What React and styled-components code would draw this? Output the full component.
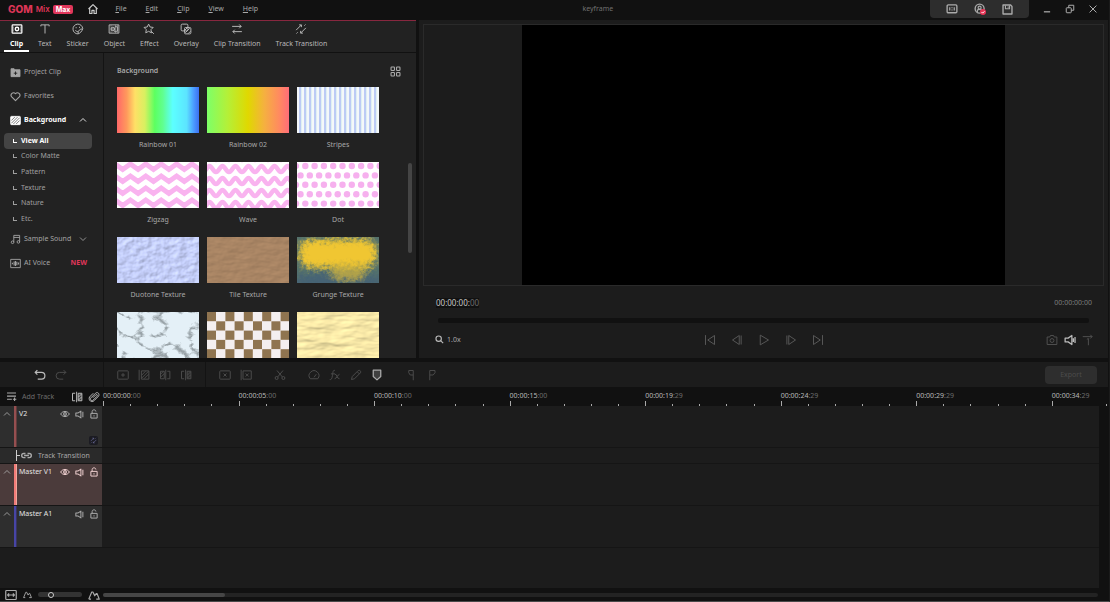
import React from "react";
import styled, { createGlobalStyle, css } from "styled-components";

const GlobalStyle = createGlobalStyle`
  *, *::before, *::after { box-sizing: border-box; }
  body {
    margin: 0;
    background: #111;
    color: #a8a8a8;
    font-family: "Noto Sans", "Open Sans", sans-serif;
    font-size: 7px;
    line-height: 10px;
  }
  button, input { font: inherit; color: inherit; margin: 0; }
  ul { list-style: none; margin: 0; padding: 0; }
`;

/* ---------- icons ---------- */

const glyphs = {
  home: <path d="M2 8 8 2.200 14 8M3.600 7v7h3v-4.200h2.800V14h3V7" strokeWidth="1.600" />,
  clip: <><rect x="1.500" y="2.500" width="13" height="11" rx="1" strokeWidth="1.600" /><circle cx="8" cy="8" r="2.300" strokeWidth="1.800" /><path d="M2 5.500h1.500M2 8h1.500M2 10.500h1.500M12.500 5.500H14M12.500 8H14M12.500 10.500H14" /></>,
  text: <path d="M2.500 4.500v-2h11v2M8 2.500V14" />,
  sticker: <><path d="M14.300 7.500A6.500 6.500 0 1 0 8 14.500c2.500-.5 5.500-3.500 6.300-7z" /><path d="M14 8c-3-.5-6 2-6 6M4.500 9.500c.8 1.500 2 2 3.500 2M5.500 5.500v1.500M10 5v1.500" /></>,
  object: <><rect x="1.500" y="2.500" width="13" height="11" /><circle cx="6.500" cy="8" r="2.500" fill="currentColor" fillOpacity=".5" /><path d="M9 5h3.500v6H8" /><path d="M4 2.500v11M12.500 2.500v11M10 2.500v11" strokeOpacity=".5" /></>,
  effect: <><path d="m7.500 1.500 1.900 3.800 4.200.6-3 3 .7 4.200-3.800-2-3.800 2 .7-4.200-3-3 4.200-.6z" /><path d="m11 11 3.500 3.500" /></>,
  overlay: <><rect x="1.500" y="1.500" width="9" height="9" rx="1.500" /><rect x="6" y="6" width="8.500" height="8.500" rx="1.500" /><path d="m6.500 9.500 3-3M7 13l6-6M11 14l3-3" /></>,
  swap: <path d="M1.500 4.500h12M11 2l2.500 2.500L11 7M14.500 11.500h-12M5 9l-2.500 2.500L5 14" />,
  swapSlant: <path d="M1.500 9.500 8.500 2.500M5.500 2.500h3v3M14.500 6.500l-7 7M10.500 13.500h-3v-3M12.500 3.500l1.500-1.500M2 14l1.500-1.500" />,
  folder: <><path d="M1.500 2.500H6L7.500 4h7v10h-13z" fill="currentColor" /><path d="M8 6.500v5M5.500 9h5" stroke="#222" /></>,
  heart: <path d="M8 14 2.500 8.500C-.5 5 4.500 0 8 4c3.500-4 8.500 1 5.500 4.500z" strokeWidth="1.600" />,
  pattern: <><rect x="1" y="2" width="14" height="12" rx="1" fill="currentColor" /><path d="m2 8 5-5M2 12l9-9M5 13l9-9M9 13l5-5" stroke="#444" strokeWidth="1" /></>,
  music: <><path d="M5.500 12V2h8.500v9.500M5.500 5H14" /><circle cx="3.700" cy="12" r="1.900" /><circle cx="12.200" cy="11.500" r="1.900" /></>,
  voice: <><rect x="1" y="2" width="14" height="12" /><path d="M3.500 7v2M6 5v6M8 4.500v7M10 5.500v5M12.500 6.500v3" strokeWidth="1.600" /></>,
  up: <path d="m2 11 6-6 6 6" strokeWidth="1.700" />,
  down: <path d="m2 5 6 6 6-6" strokeWidth="1.700" />,
  tiles: <><rect x="1.500" y="1.500" width="5" height="5" rx="1" strokeWidth="1.600" /><rect x="9.500" y="1.500" width="5" height="5" rx="1" strokeWidth="1.600" /><rect x="1.500" y="9.500" width="5" height="5" rx="1" strokeWidth="1.600" /><rect x="9.500" y="9.500" width="5" height="5" rx="1" strokeWidth="1.600" /></>,
  keypad: <><rect x="1.500" y="2.500" width="13" height="10.500" rx="1.500" strokeWidth="1.800" /><path d="M5 5.500v4.500M8 5.500v1.500M8 8.500V10M11 5.500v4.500" strokeWidth="1.600" /></>,
  account: <><circle cx="7.500" cy="7.500" r="6" strokeWidth="1.800" /><circle cx="7.500" cy="6.200" r="2" strokeWidth="1.600" /><path d="M4.500 12V9.500c1-1.500 5-1.500 6 0V12" strokeWidth="1.600" /><circle cx="12" cy="12" r="4" fill="#e83355" stroke="none" /><path d="m10 12 1.500 1.500L14 11" stroke="#fff" /></>,
  save: <><path d="M1.500 1.500h11l2 2v11h-13z" strokeWidth="2" /><path d="M5 2v5h6V2M9 3.500v2" strokeWidth="1.600" /></>,
  minimize: <path d="M3 12.500h10" strokeWidth="2" />,
  restore: <><rect x="2" y="6" width="8" height="8" rx="1" strokeWidth="1.600" /><path d="M6 6V2h8v8h-4" strokeWidth="1.600" /></>,
  close: <path d="m2.500 2.500 11 11M13.500 2.500l-11 11" strokeWidth="1.600" />,
  search: <><circle cx="6.500" cy="6.500" r="4.800" strokeWidth="2" /><path d="m10 10 4.500 4.500" strokeWidth="2" /></>,
  toStart: <path d="M2 1.500v13M14 2v12L5 8z" />,
  frameBack: <path d="M11 2v12L2 8zM13.500 2v12" />,
  play: <path d="M3 1.500v13L14 8z" />,
  frameNext: <path d="M5 2v12l9-6zM2.500 2v12" />,
  toEnd: <path d="M14 1.500v13M2 2v12l9-6z" />,
  camera: <><path d="M1.500 4H5l1-2h4l1 2h3.500v10h-13z" /><circle cx="8" cy="8.700" r="2.600" /></>,
  speaker: <path d="M1.500 5.500h4L10.500 2v12l-5-3.500h-4zM12.500 5.500v5M14.700 4v8" strokeWidth="1.700" />,
  route: <path d="M1 3.500h12.500M11 1l2.500 2.500L11 6M6.500 7l2-1v9" />,
  undo: <path d="M4.500 1.500 1.500 4.500l3 3M1.500 4.500H10a4.500 4.500 0 0 1 0 9H5" strokeWidth="1.600" />,
  redo: <path d="m11.500 1.500 3 3-3 3M14.500 4.500H6a4.500 4.500 0 0 0 0 9h5" />,
  insert: <><rect x="1" y="2.500" width="14" height="11" rx="1" /><path d="M8 5.500v5M5.500 8h5" /></>,
  hatchLeft: <><path d="M1.500 1v14" /><rect x="4.500" y="2.500" width="10" height="11" /><path d="m5 8 5-5M5 12l9-9M8 13l6-6" /></>,
  splitLeft: <><path d="M9 1v14M11 3h3.500v10H11" /><rect x="2" y="3" width="5" height="10" /><path d="m2 7 4-4M2 11l5-5" /></>,
  splitRight: <><path d="M7.500 1v14M5.500 3H2v10h3.500" /><rect x="9.500" y="3" width="5" height="10" fill="currentColor" fillOpacity=".3" /><path d="m10 8 4-4M10 12l4-4" /></>,
  remove: <><rect x="1" y="2.500" width="14" height="11" rx="1" /><path d="m6 6 4 4M10 6l-4 4" /></>,
  removeLeft: <><path d="M1.500 1v14" /><rect x="4" y="2.500" width="11" height="11" /><path d="m7.500 6 4 4M11.500 6l-4 4" /></>,
  cut: <><circle cx="3.500" cy="12" r="2" /><circle cx="12.500" cy="12" r="2" /><path d="m5 10.500 7-8.500M11 10.500 4 2" /></>,
  speed: <path d="M3 13a6.500 6.500 0 1 1 10 0zM8 11l3-4" />,
  fx: <path d="M8 2C5 1 5.500 4 4.500 9 4 13 3 14.500 1 14M2.500 6.500H8M8 7c3-.5 2 6 6 6M14 7c-2 0-4 6-6.500 6" />,
  pen: <path d="m2 14 1-4 8-8c2-1 4 1 3 3l-8 8zM10 4l2.500 2.500" />,
  marker: <path d="M3 1.500h10V10l-5 4.500L3 10z" fill="currentColor" fillOpacity=".25" strokeWidth="1.700" />,
  flagIn: <path d="M11 15V2H5v3l2 3h4" />,
  flagOut: <path d="M5 15V2h7v3L9.500 8H5" />,
  list: <path d="M1.500 3h13M1.500 7.500h13M1.500 12h7M12.500 9.500v5M10 12h5" strokeWidth="1.600" />,
  magnet: <path d="m6.500 9 4-4c1.500-1 2.500.5 1.500 2l-5 5c-2 2-5-.5-3-3l6-6c3-2.500 6 1 4 4l-6 6c-3 3-8-.5-6-5l5-5" />,
  eye: <><path d="M1 8c3.500-5.500 10.500-5.500 14 0-3.500 5.500-10.500 5.500-14 0z" strokeWidth="1.600" /><circle cx="8" cy="8" r="2.200" strokeWidth="1.800" /></>,
  mute: <path d="M1.500 5.500H5L10.500 2v12L5 10.500H1.500zM14 3v10" strokeWidth="1.800" />,
  unlock: <><rect x="3" y="7" width="10" height="7.500" strokeWidth="1.600" /><path d="M5 7V4c0-3.500 6-3.500 6 0M8 10v2" strokeWidth="1.600" /></>,
  link: <path d="M6.500 5H4a3 3 0 0 0 0 6h2.500M9.500 5H12a3 3 0 0 1 0 6H9.500M4.500 8h7" strokeWidth="2" />,
  fit: <><rect x="1" y="2" width="14" height="12" rx="1" strokeWidth="1.600" /><path d="M3.500 8h9M5.500 6l-2 2 2 2M10.500 6l2 2-2 2" strokeWidth="1.600" /></>,
  peaks: <path d="m1 13.500 4-9.500h1.500L9 9l2-3h1l3 7.500h-4M1 13.500h3" strokeWidth="1.600" />,
};

const Svg = styled.svg`
  display: block;
  flex: none;
  fill: none;
  stroke: currentColor;
  stroke-width: 1.3;
  stroke-linejoin: round;
`;

const Icon = ({ name, size = 12 }) => (
  <Svg width={size} height={size} viewBox="0 0 16 16" aria-hidden="true">{glyphs[name]}</Svg>
);

/* ---------- shared ---------- */

const IconButton = styled.button`
  display: flex;
  align-items: center;
  justify-content: center;
  flex: none;
  padding: 0;
  border: 0;
  background: none;
  color: ${(p) => p.$color || "#aaa"};
`;

const Tool = ({ name, label, size, color }) => (
  <IconButton type="button" aria-label={label || name} $color={color}>
    <Icon name={name} size={size} />
  </IconButton>
);

const App$ = styled.div`
  display: flex;
  flex-direction: column;
  min-height: 100vh;
  border-right: 1px solid #1b1b1b;
  border-bottom: 1px solid #4a4a4a;
  overflow: hidden;
`;

/* ---------- title bar ---------- */

const TitleBar = styled.header`
  display: grid;
  grid-template-columns: 7fr auto 6fr;
  height: 20px;
  background: #111;
`;

const TitleLeft = styled.div`
  display: flex;
  align-items: center;
  height: 18px;
  padding-left: 8px;
`;

const Brand = styled.div`
  display: flex;
  align-items: center;
  gap: 3px;
  margin-right: 14px;
  color: #dc3556;
  font-family: Inter, sans-serif;
  font-weight: 600;
  font-size: 8px;
`;

const BrandName = styled.span`
  font-size: 10px;
  font-weight: 800;
`;

const BrandBadge = styled.span`
  padding: 0 3px;
  border-radius: 2px;
  background: #e0365a;
  color: #fff;
  font-size: 7px;
  font-weight: 700;
  line-height: 9px;
`;

const Menu = styled.nav`
  display: flex;
  gap: 19px;
  margin-left: 16px;
`;

const MenuItem = styled.button`
  padding: 0;
  border: 0;
  background: none;
  color: #aaa;
  &::first-letter { text-decoration: underline; }
`;

const DocumentName = styled.div`
  height: 18px;
  padding-left: 4px;
  color: #707070;
  line-height: 18px;
`;

const TitleRight = styled.div`
  display: flex;
  justify-content: flex-end;
`;

const QuickActions = styled.div`
  display: flex;
  align-items: center;
  justify-content: space-between;
  width: 99px;
  height: 18px;
  padding: 0 16px;
  border-radius: 0 0 4px 4px;
  background: #2d2d2d;
`;

const WindowButtons = styled.div`
  display: flex;
  align-items: center;
  gap: 13px;
  height: 18px;
  padding: 0 11px 0 13px;
`;

/* ---------- upper workspace ---------- */

const Workspace = styled.main`
  display: flex;
  gap: 3px;
  flex: 1 1 338px;
  margin-right: 1px;
`;

const Library = styled.section`
  display: flex;
  flex-direction: column;
  flex: 0 0 416px;
  border-top: 1px solid #87273f;
  background: #222;
`;

const Tabs = styled.div`
  display: flex;
  gap: 3px;
  height: 32px;
  padding-left: 4px;
  border-bottom: 1px solid #111;
`;

const Tab = styled.button`
  display: flex;
  flex-direction: column;
  align-items: center;
  gap: 4px;
  padding: 2px 6px 0;
  border: 0;
  border-bottom: 2px solid ${(p) => (p.$active ? "#fff" : "transparent")};
  background: none;
  color: ${(p) => (p.$active ? "#fff" : "#b8b8b8")};
  font-weight: ${(p) => (p.$active ? 700 : 400)};
  line-height: 10px;
`;

const LibraryBody = styled.div`
  display: flex;
  flex: 1;
`;

const Sidebar = styled.nav`
  flex: 0 0 104px;
  padding-top: 7px;
  border-right: 1px solid #141414;
`;

const Category = styled.button`
  display: flex;
  align-items: center;
  gap: 3px;
  width: 100%;
  height: 24px;
  padding: 0 16px 0 10px;
  border: 0;
  background: none;
  color: ${(p) => (p.$active ? "#fff" : "#a4a4a4")};
  font-weight: ${(p) => (p.$active ? 700 : 400)};
`;

const CategoryName = styled.span`
  flex: 1;
  text-align: left;
`;

const NewTag = styled.span`
  color: #e0365a;
  font-weight: 700;
`;

const SubList = styled.ul`
  display: grid;
  grid-auto-rows: 1fr;
  height: 95px;
  padding: 1px 11px 0 4px;
`;

const SubItem = styled.button`
  display: flex;
  align-items: center;
  gap: 4px;
  width: 100%;
  height: 100%;
  padding: 0 0 0 9px;
  border: 0;
  border-radius: 4px;
  background: ${(p) => (p.$active ? "#444" : "none")};
  color: ${(p) => (p.$active ? "#fff" : "#a0a0a0")};
  font-weight: ${(p) => (p.$active ? 700 : 400)};
`;

const Elbow = styled.span`
  width: 4px;
  height: 4px;
  border: solid currentColor;
  border-width: 0 0 1px 1px;
`;

const Assets = styled.div`
  display: flex;
  flex: 1;
  flex-direction: column;
`;

const AssetsHeader = styled.div`
  display: flex;
  align-items: center;
  justify-content: space-between;
  height: 34px;
  padding: 2px 15px 0 13px;
`;

const AssetsTitle = styled.h2`
  margin: 0;
  font-size: 7px;
  font-weight: 600;
`;

const AssetsScroll = styled.div`
  display: flex;
  flex: 1 1 0;
  min-height: 0;
  justify-content: space-between;
  padding: 0 4px 0 13px;
  overflow: hidden;
`;

const AssetGrid = styled.ul`
  display: grid;
  grid-template-columns: repeat(3, 82px);
  grid-auto-rows: 75px;
  gap: 0 8px;
  height: 0;
`;

const AssetItem = styled.li`
  text-align: center;
`;

const Thumb = styled.svg`
  display: block;
  width: 100%;
  height: 46px;
  margin-bottom: 7px;
`;

const ScrollThumb = styled.div`
  width: 4px;
  height: 90px;
  margin-top: 76px;
  border-radius: 2px;
  background: #454545;
`;

/* ---------- preview ---------- */

const Preview = styled.section`
  display: flex;
  flex: 1;
  flex-direction: column;
  min-width: 0;
  padding: 4px 4px 0;
  background: #1c1c1c;
`;

const Stage = styled.div`
  display: flex;
  flex: 1;
  justify-content: center;
  min-height: 0;
  border: 1px solid #2a2a2a;
`;

const Video = styled.div`
  aspect-ratio: 13 / 7;
  background: #000;
`;

const TimeRow = styled.div`
  display: flex;
  align-items: center;
  justify-content: space-between;
  height: 32px;
  padding: 2px 12px 0 13px;
`;

const CurrentTime = styled.span`
  background: #111;
  color: #c8c8c8;
  font-size: 8px;
`;

const Dim = styled.span`
  color: #6c6c6c;
`;

const Duration = styled.span`
  color: #7c7c7c;
`;

const Seek = styled.input`
  appearance: none;
  display: block;
  height: 5px;
  margin: 0 15px;
  border-radius: 2px;
  background: #111;
  &::-webkit-slider-thumb { appearance: none; width: 0; height: 0; }
`;

const Transport = styled.div`
  display: grid;
  grid-template-columns: 1fr auto 1fr;
  align-items: center;
  height: 35px;
  padding: 0 10px 2px;
`;

const ZoomLevel = styled.div`
  display: flex;
  align-items: center;
  gap: 3px;
  padding-left: 2px;
`;

const PlayButtons = styled.div`
  display: flex;
  gap: 15px;
`;

const PreviewTools = styled.div`
  display: flex;
  justify-content: flex-end;
  gap: 6px;
`;

/* ---------- timeline ---------- */

const Toolbar = styled.div`
  display: flex;
  align-items: stretch;
  height: 25px;
  margin: 4px 1px 0 0;
  padding-right: 11px;
  background: #1c1c1c;
`;

const ToolGroup = styled.div`
  display: flex;
  align-items: center;
  gap: 22px;
  padding: 0 13px;
  border-right: ${(p) => (p.$last ? 0 : 1)}px solid #131313;
  ${(p) => p.$history && css`flex: 0 0 104px; padding-left: 34px;`}
`;

const ToolSet = styled.div`
  display: flex;
  gap: 9px;
`;

const ExportButton = styled.button`
  align-self: center;
  width: 52px;
  height: 18px;
  margin-left: auto;
  padding: 0;
  border: 0;
  border-radius: 4px;
  background: #2e2e2e;
  color: #4c4c4c;
`;

const RulerRow = styled.div`
  display: flex;
  height: 19px;
  background: #111;
`;

const RulerHead = styled.div`
  display: flex;
  align-items: center;
  flex: 0 0 103px;
  gap: 5px;
  padding: 0 3px 0 6px;
  color: #666;
`;

const AddTrack = styled.button`
  display: flex;
  flex: 1;
  align-items: center;
  gap: 5px;
  padding: 0;
  border: 0;
  background: none;
  color: #6c6c6c;
  svg { color: #aaa; }
`;

const Ruler = styled.div`
  display: grid;
  flex: 1;
  grid-template-columns: repeat(7, minmax(0, 5fr)) minmax(0, 2fr);
  padding-right: 3px;
`;

const RulerCell = styled.div`
  display: flex;
  flex-direction: column;
  justify-content: space-between;
  padding-top: 4px;
  color: #b8b8b8;
  white-space: nowrap;
`;

const Ticks = styled.div`
  display: grid;
  grid-template-columns: repeat(${(p) => p.$count}, 1fr);
  align-items: end;
  height: 5px;
`;

const Tick = styled.span`
  width: 1px;
  height: ${(p) => (p.$major ? 5 : 2)}px;
  background: #aaa;
`;

const LastTick = styled(Tick)`
  justify-self: end;
  margin-right: -1px;
  grid-area: 1 / 2;
`;

const TrackArea = styled.section`
  display: flex;
  flex-direction: column;
  margin-right: 10px;
  background: #1c1c1c;
`;

const TrackRow = styled.div`
  display: flex;
  height: ${(p) => p.$height}px;
  border-bottom: 1px solid #151515;
`;

const TrackHead = styled.div`
  display: flex;
  position: relative;
  flex: 0 0 102px;
  align-items: flex-start;
  background: ${(p) => p.$bg};
`;

const TrackFold = styled.div`
  display: flex;
  flex: 0 0 14px;
  justify-content: center;
  padding-top: 4px;
`;

const TrackStripe = styled.div`
  align-self: stretch;
  flex: 0 0 3px;
  border-right: 1px solid ${(p) => p.$edge};
  background: ${(p) => p.$color};
`;

const TrackName = styled.span`
  flex: 1;
  padding: 3px 0 0 2px;
  color: #e4e4e4;
`;

const TrackTools = styled.div`
  display: flex;
  gap: 5px;
  padding: 3px 3px 0 0;
`;

const KeyBadge = styled.span`
  position: absolute;
  right: 4px;
  bottom: 2px;
  padding: 1px;
  border-radius: 2px;
  background: #1b1b22;
  color: #7779aa;
`;

const TransitionHead = styled(TrackHead)`
  align-items: center;
  gap: 6px;
  padding-left: 16px;
`;

const LinkMark = styled.span`
  display: flex;
  align-items: center;
  align-self: stretch;
  gap: 1px;
  margin: 2px 0;
  border-left: 1px solid #ccc;
  color: #aaa;
  &::before { content: ""; width: 3px; height: 1px; background: #ccc; }
`;

const EmptyRow = styled.div`
  height: 40px;
`;

const BottomBar = styled.footer`
  display: flex;
  align-items: center;
  height: 13px;
  padding: 0 11px 0 5px;
  gap: 6px;
`;

const ScaleSlider = styled.input`
  appearance: none;
  flex: none;
  width: 44px;
  height: 5px;
  border-radius: 3px;
  background: #333;
  &::-webkit-slider-thumb {
    appearance: none;
    width: 6px;
    height: 6px;
    border: 1px solid #ccc;
    border-radius: 50%;
    background: #222;
  }
`;

const HScroll = styled.div`
  flex: 1;
  margin-left: -3px;
  border-radius: 2px;
  background: #232323;
`;

const HScrollThumb = styled.div`
  width: 122px;
  height: 4px;
  border-radius: 2px;
  background: #464646;
`;

/* ---------- thumbnail artwork ---------- */

const range = (n) => Array.from({ length: n }, (_, i) => i);
const zig = (y) => `M-10 ${y + 3.5}` + range(13).map((i) => ` L${i * 7.7 - 2} ${i % 2 ? y + 3.5 : y - 2}`).join("");
const wave = (y) => `M-4 ${y + 3}` + range(8).map(() => " c3 0 4 -6 6.500 -6 c2.500 0 3.500 6 6.500 6").join("");

const Relief = ({ id, color, freq, scale, seed }) => (
  <>
    <filter id={id} x="0" y="0" width="100%" height="100%" colorInterpolationFilters="sRGB">
      <feTurbulence type="fractalNoise" baseFrequency={freq} numOctaves="3" seed={seed} result="n" />
      <feDiffuseLighting in="n" surfaceScale={scale} diffuseConstant="1.150" lightingColor={color}>
        <feDistantLight azimuth="225" elevation="60" />
      </feDiffuseLighting>
    </filter>
    <rect width="82" height="46" filter={`url(#${id})`} />
  </>
);

const Gradient = ({ id, stops }) => (
  <>
    <linearGradient id={id}>
      {stops.map(([o, c]) => <stop key={o} offset={o} stopColor={c} />)}
    </linearGradient>
    <rect width="82" height="46" fill={`url(#${id})`} />
  </>
);

const assets = [
  ["Rainbow 01", <Gradient id="rb1" stops={[[0, "#ff6868"], [0.12, "#ff9a5c"], [0.22, "#ffe066"], [0.34, "#d8f060"], [0.46, "#5cff60"], [0.56, "#60ff90"], [0.68, "#5cffff"], [0.85, "#5ce4ff"], [0.94, "#4a98ff"], [1, "#3c70f0"]]} />],
  ["Rainbow 02", <Gradient id="rb2" stops={[[0, "#7dff68"], [0.25, "#b4f038"], [0.5, "#e0d800"], [0.7, "#f5b040"], [0.88, "#ff8a60"], [1, "#ff6d78"]]} />],
  ["Stripes", <>
    <rect width="82" height="46" fill="#f4f8fa" />
    {range(17).map((i) => <rect key={i} x={i * 5 + 2} width="2" height="46" fill="#bccbf5" />)}
    {range(17).map((i) => <rect key={i} x={i * 5 + 4} width="1" height="46" fill="#dff0f2" />)}
  </>],
  ["Zigzag", <>
    <rect width="82" height="46" fill="#fff" />
    {[4, 16, 28, 40].map((y) => <path key={y} d={zig(y)} fill="none" stroke="#f9b3ef" strokeWidth="5" strokeLinejoin="miter" />)}
  </>],
  ["Wave", <>
    <rect width="82" height="46" fill="#fff" />
    {[-5, 7, 19, 31, 43].map((y) => <path key={y} d={wave(y)} fill="none" stroke="#f9b3ef" strokeWidth="4.500" />)}
  </>],
  ["Dot", <>
    <rect width="82" height="46" fill="#fff" />
    {range(5).map((r) => range(10).map((c) => (
      <circle key={`${r}-${c}`} cx={(r % 2 ? 3.5 : -1) + c * 9.3} cy={4 + r * 9.4} r="3.200" fill="#f6b0ee" />
    )))}
  </>],
  ["Duotone Texture", <Relief id="duo" color="#c4cef9" freq="0.12 0.16" scale="0.900" seed="4" />],
  ["Tile Texture", <Relief id="tile" color="#a98564" freq="0.08 0.2" scale="0.400" seed="9" />],
  ["Grunge Texture", <>
    <filter id="rough" x="-20%" y="-20%" width="140%" height="140%">
      <feGaussianBlur in="SourceGraphic" stdDeviation="3" result="b" />
      <feTurbulence type="fractalNoise" baseFrequency=".3" numOctaves="3" seed="3" result="n" />
      <feDisplacementMap in="b" in2="n" scale="12" xChannelSelector="R" yChannelSelector="G" />
    </filter>
    <rect width="82" height="46" fill="#53706c" />
    <ellipse cx="41" cy="44" rx="46" ry="8" fill="#3e5a7c" opacity=".6" filter="url(#rough)" />
    <rect x="2" y="2" width="78" height="29" rx="13" fill="#f0c632" filter="url(#rough)" />
    <rect x="34" y="26" width="34" height="18" rx="8" fill="#d8b83a" opacity=".7" filter="url(#rough)" />
  </>],
  ["Marble", <>
    <filter id="veins" x="0" y="0" width="100%" height="100%" colorInterpolationFilters="sRGB">
      <feTurbulence type="turbulence" baseFrequency=".04 .06" numOctaves="4" seed="12" />
      <feColorMatrix values="0 0 0 0 .6  0 0 0 0 .64  0 0 0 0 .66  -6 0 0 0 1.500" />
    </filter>
    <rect width="82" height="46" fill="#e4f0f7" />
    <rect width="82" height="46" filter="url(#veins)" />
  </>],
  ["Checker Tile", <>
    <rect width="82" height="46" fill="#f4eff0" />
    {range(5).map((r) => range(9).filter((c) => (r + c) % 2 === 0).map((c) => (
      <rect key={`${r}-${c}`} x={c * 9.2} y={r * 9.3} width="9" height="9.200" fill="#8f7450" />
    )))}
  </>],
  ["Paper", <Relief id="paper" color="#f9e9a8" freq="0.04 0.12" scale="1.100" seed="21" />],
];

/* ---------- data ---------- */

const tabs = [
  ["Clip", "clip"], ["Text", "text"], ["Sticker", "sticker"], ["Object", "object"],
  ["Effect", "effect"], ["Overlay", "overlay"], ["Clip Transition", "swap"], ["Track Transition", "swapSlant"],
];
const subItems = ["View All", "Color Matte", "Pattern", "Texture", "Nature", "Etc."];
const times = [
  ["00:00:00", ":00"], ["00:00:05", ":00"], ["00:00:10", ":00"], ["00:00:15", ":00"],
  ["00:00:19", ":29"], ["00:00:24", ":29"], ["00:00:29", ":29"], ["00:00:34", ":29"],
];
const dimTool = "#4c4c4c";

const Track = ({ name, bg, color, edge, eye, badge, bright, height = 42 }) => (
  <TrackRow $height={height}>
    <TrackHead $bg={bg}>
      <TrackFold><Tool name="up" label={`Collapse ${name}`} size={8} /></TrackFold>
      <TrackStripe $color={color} $edge={edge} />
      <TrackName>{name}</TrackName>
      <TrackTools>
        {eye && <Tool name="eye" size={10} color={bright} />}
        <Tool name="mute" size={9} color={bright} />
        <Tool name="unlock" size={10} color={bright} />
      </TrackTools>
      {badge && <KeyBadge><Icon name="swapSlant" size={7} /></KeyBadge>}
    </TrackHead>
  </TrackRow>
);

export default function App() {
  return (
    <App$>
      <GlobalStyle />
      <TitleBar>
        <TitleLeft>
          <Brand><BrandName>GOM</BrandName><span>Mix</span><BrandBadge>Max</BrandBadge></Brand>
          <Tool name="home" label="Home" color="#ccc" />
          <Menu>
            {["File", "Edit", "Clip", "View", "Help"].map((m) => <MenuItem key={m} type="button">{m}</MenuItem>)}
          </Menu>
        </TitleLeft>
        <DocumentName>keyframe</DocumentName>
        <TitleRight>
          <QuickActions>
            <Tool name="keypad" label="Shortcuts" color="#aaa" />
            <Tool name="account" label="Account" color="#aaa" />
            <Tool name="save" label="Save" size={11} color="#aaa" />
          </QuickActions>
          <WindowButtons>
            <Tool name="minimize" label="Minimize" size={10} />
            <Tool name="restore" label="Restore" size={10} />
            <Tool name="close" label="Close" size={10} />
          </WindowButtons>
        </TitleRight>
      </TitleBar>

      <Workspace>
        <Library>
          <Tabs>
            {tabs.map(([label, icon], i) => (
              <Tab key={label} type="button" $active={i === 0}>
                <Icon name={icon} />
                {label}
              </Tab>
            ))}
          </Tabs>
          <LibraryBody>
            <Sidebar>
              <Category type="button"><Icon name="folder" size={11} /><CategoryName>Project Clip</CategoryName></Category>
              <Category type="button"><Icon name="heart" size={11} /><CategoryName>Favorites</CategoryName></Category>
              <Category type="button" $active><Icon name="pattern" size={11} /><CategoryName>Background</CategoryName><Icon name="up" size={8} /></Category>
              <SubList>
                {subItems.map((s, i) => (
                  <li key={s}><SubItem type="button" $active={i === 0}><Elbow />{s}</SubItem></li>
                ))}
              </SubList>
              <Category type="button"><Icon name="music" size={11} /><CategoryName>Sample Sound</CategoryName><Icon name="down" size={8} /></Category>
              <Category type="button"><Icon name="voice" size={11} /><CategoryName>AI Voice</CategoryName><NewTag>NEW</NewTag></Category>
            </Sidebar>
            <Assets>
              <AssetsHeader>
                <AssetsTitle>Background</AssetsTitle>
                <Tool name="tiles" label="Thumbnail view" size={11} />
              </AssetsHeader>
              <AssetsScroll>
                <AssetGrid>
                  {assets.map(([name, art], i) => (
                    <AssetItem key={name}>
                      <Thumb viewBox="0 0 82 46" preserveAspectRatio="none" role="img" aria-label={name}>{art}</Thumb>
                      {i < 9 && name}
                    </AssetItem>
                  ))}
                </AssetGrid>
                <ScrollThumb />
              </AssetsScroll>
            </Assets>
          </LibraryBody>
        </Library>

        <Preview>
          <Stage><Video /></Stage>
          <TimeRow>
            <CurrentTime>00:00:00:<Dim>00</Dim></CurrentTime>
            <Duration>00:00:00:00</Duration>
          </TimeRow>
          <Seek type="range" aria-label="Playback position" defaultValue="0" />
          <Transport>
            <ZoomLevel><Tool name="search" label="Zoom" size={9} color="#bbb" />1.0x</ZoomLevel>
            <PlayButtons>
              {["toStart", "frameBack", "play", "frameNext", "toEnd"].map((n) => <Tool key={n} name={n} color="#585858" />)}
            </PlayButtons>
            <PreviewTools>
              <Tool name="camera" label="Snapshot" color="#505050" />
              <Tool name="speaker" label="Volume" color="#bbb" />
              <Tool name="route" label="Output" color="#505050" />
            </PreviewTools>
          </Transport>
        </Preview>
      </Workspace>

      <Toolbar>
        <ToolGroup $history>
          <ToolSet>
            <Tool name="undo" color="#bbb" /><Tool name="redo" color={dimTool} />
          </ToolSet>
        </ToolGroup>
        <ToolGroup>
          <ToolSet>
            {["insert", "hatchLeft", "splitLeft", "splitRight"].map((n) => <Tool key={n} name={n} color={dimTool} />)}
          </ToolSet>
        </ToolGroup>
        <ToolGroup $last>
          <ToolSet><Tool name="remove" color={dimTool} /><Tool name="removeLeft" color={dimTool} /></ToolSet>
          <Tool name="cut" color={dimTool} />
          <ToolSet>
            <Tool name="speed" color={dimTool} /><Tool name="fx" color={dimTool} />
            <Tool name="pen" color={dimTool} /><Tool name="marker" color="#aaa" />
          </ToolSet>
          <ToolSet><Tool name="flagIn" color={dimTool} /><Tool name="flagOut" color={dimTool} /></ToolSet>
        </ToolGroup>
        <ExportButton type="button" disabled>Export</ExportButton>
      </Toolbar>

      <RulerRow>
        <RulerHead>
          <AddTrack type="button"><Icon name="list" size={11} />Add Track</AddTrack>
          <Tool name="splitRight" label="Ripple edit" color="#bbb" />
          <Tool name="magnet" label="Snap" color="#bbb" />
        </RulerHead>
        <Ruler>
          {times.map(([t, f], i) => (
            <RulerCell key={t}>
              <span>{t}<Dim>{f}</Dim></span>
              <Ticks $count={i === 7 ? 2 : 5}>
                {range(i === 7 ? 2 : 5).map((k) => <Tick key={k} $major={k === 0} />)}
                {i === 7 && <LastTick />}
              </Ticks>
            </RulerCell>
          ))}
        </Ruler>
      </RulerRow>

      <TrackArea>
        <Track name="V2" bg="#2e2e2e" color="#954f50" edge="#5f3b3c" eye badge bright="#aaa" />
        <TrackRow $height={16}>
          <TransitionHead $bg="#2a2a2a">
            <LinkMark><Icon name="link" size={11} /></LinkMark>
            Track Transition
          </TransitionHead>
        </TrackRow>
        <Track name="Master V1" bg="#4b3b3b" color="#f27c78" edge="#f0a59c" eye bright="#eecfcf" />
        <Track name="Master A1" bg="#2e2e2e" color="#4745a5" edge="#37345f" bright="#aaa" />
        <EmptyRow />
      </TrackArea>

      <BottomBar>
        <Tool name="fit" label="Fit timeline" />
        <Tool name="peaks" label="Zoom out" size={9} />
        <ScaleSlider type="range" aria-label="Timeline scale" defaultValue="26" />
        <Tool name="peaks" label="Zoom in" />
        <HScroll><HScrollThumb /></HScroll>
      </BottomBar>
    </App$>
  );
}
